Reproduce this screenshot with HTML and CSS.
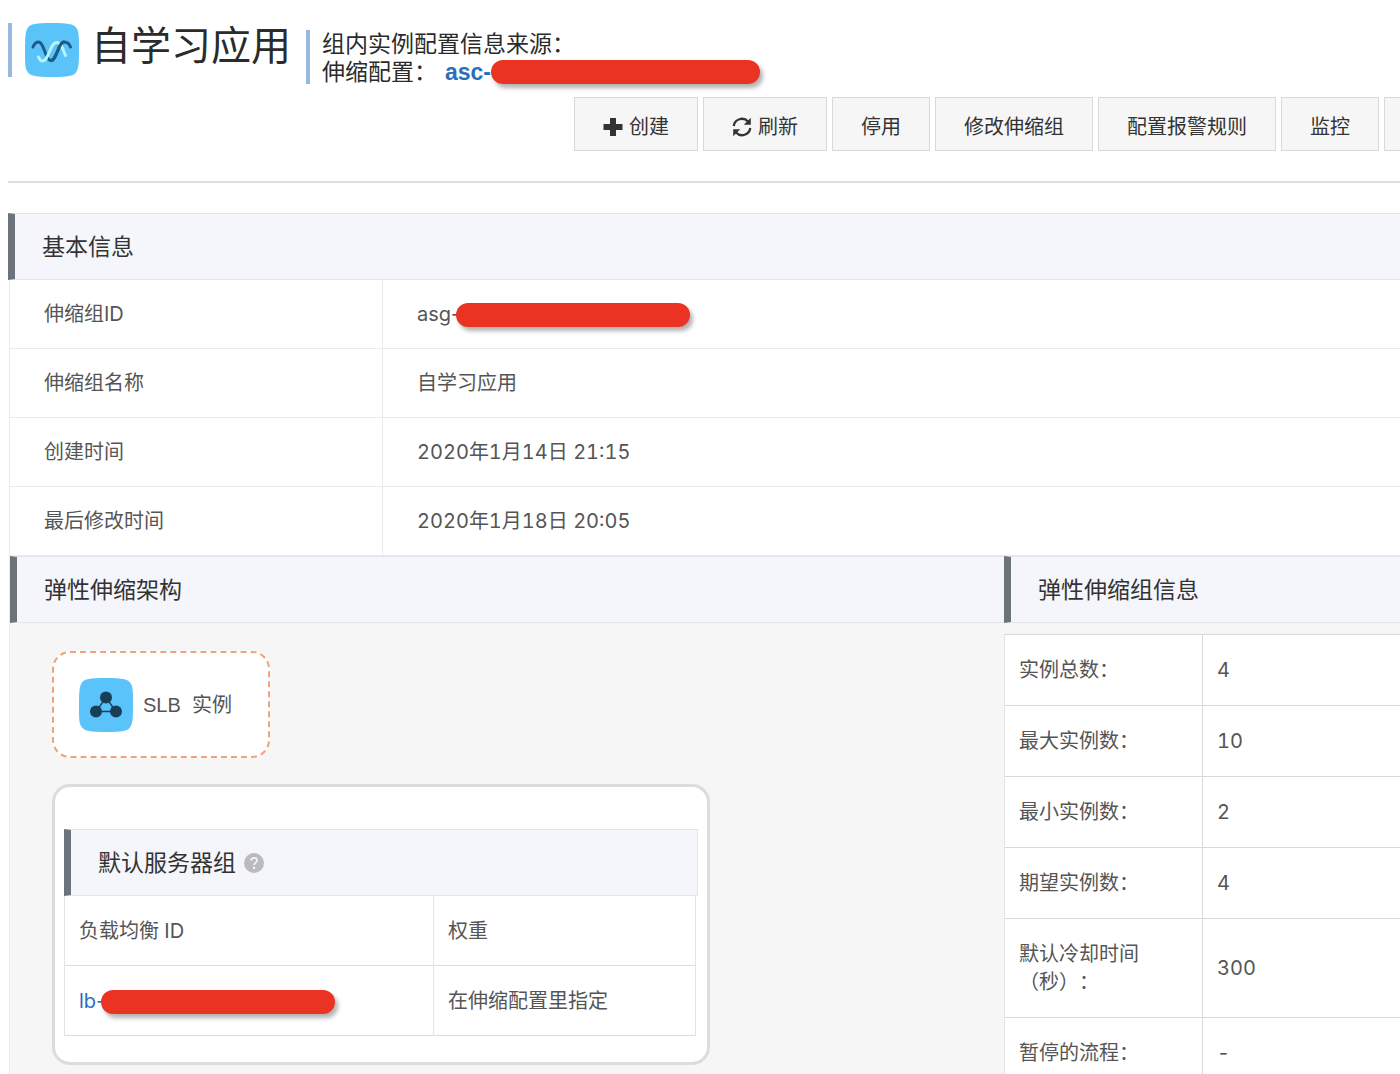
FILE: index.html
```html
<!DOCTYPE html>
<html lang="zh-CN">
<head>
<meta charset="utf-8">
<meta name="viewport" content="width=device-width, initial-scale=1">
<title>自学习应用</title>
<link rel="stylesheet" href="styles.css">
</head>
<body>
<main class="page">
  <header class="page-header">
    <div class="identity">
      <svg class="app-icon" viewBox="0 0 54 54" aria-hidden="true">
        <path d="M27 0C43 0 48 1 51 4.500S54 13 54 27S53.500 46 51 49.500S43 54 27 54S6 53 3 49.500S0 41 0 27S.5 8 3 4.500S11 0 27 0Z" fill="#5ac3fa"/>
        <g fill="none" stroke-width="3" stroke-linecap="round">
          <path d="M8 24C9.500 20.500 11 19 13.500 19C19 19 20.500 37.500 26 37.500C31.500 37.500 33.500 19 39 19C42 19 44.500 21 45.500 24" stroke="#1d5c86"/>
          <path d="M13.500 34C14.500 36.500 15.500 38 17.500 38C23.500 38 25.500 19.500 31.500 19.500C36.500 19.500 38.500 28 40.500 32.500" stroke="#b9f3ff"/>
          <path d="M26 37.500C31.500 37.500 33.500 19 39 19" stroke="#1d5c86"/>
        </g>
      </svg>
      <h1 class="title">自学习应用</h1>
    </div>
    <div class="source">
      <p>组内实例配置信息来源：</p>
      <p>伸缩配置：<a class="config-link" href="#config">asc-<span class="mask mask-wide"></span></a></p>
    </div>
  </header>

  <div class="toolbar">
    <button class="btn" type="button">
      <svg class="btn-icon" viewBox="0 0 20 20" aria-hidden="true"><path d="M7 1H13V7H19.500V13H13V19H7V13H.5V7H7Z" fill="#333"/></svg>创建</button>
    <button class="btn" type="button">
      <svg class="btn-icon" viewBox="0 0 20 20" aria-hidden="true"><path d="M1.700 9A8.300 8.300 0 0 1 16 4.500M18.300 11A8.300 8.300 0 0 1 4 15.500" fill="none" stroke="#333" stroke-width="2.300"/><path d="M18.800 .8V7.800H11.800ZM1.200 19.200V12.200H8.200Z" fill="#333"/></svg>刷新</button>
    <button class="btn" type="button">停用</button>
    <button class="btn" type="button">修改伸缩组</button>
    <button class="btn" type="button">配置报警规则</button>
    <button class="btn" type="button">监控</button>
    <button class="btn btn-more" type="button" aria-label="更多"></button>
  </div>

  <section class="basic">
    <h2 class="section-title">基本信息</h2>
    <table class="basic-table">
      <tbody>
        <tr><th scope="row">伸缩组ID</th><td class="resource-id">asg-<span class="mask"></span></td></tr>
        <tr><th scope="row">伸缩组名称</th><td>自学习应用</td></tr>
        <tr><th scope="row">创建时间</th><td>2020年1月14日 21:15</td></tr>
        <tr><th scope="row">最后修改时间</th><td>2020年1月18日 20:05</td></tr>
      </tbody>
    </table>
  </section>

  <div class="columns">
    <section>
      <h2 class="section-title">弹性伸缩架构</h2>
      <div class="architecture">
        <div class="slb">
          <svg class="app-icon" viewBox="0 0 54 54" aria-hidden="true">
            <path d="M27 0C43 0 48 1 51 4.500S54 13 54 27S53.500 46 51 49.500S43 54 27 54S6 53 3 49.500S0 41 0 27S.5 8 3 4.500S11 0 27 0Z" fill="#5ac3fa"/>
            <path d="M27 19.500L17 33.500H37Z" fill="none" stroke="#173f57" stroke-width="1.400"/>
            <g fill="#173f57"><circle cx="27" cy="19.500" r="6"/><circle cx="17" cy="33.500" r="6"/><circle cx="37" cy="33.500" r="6"/></g>
          </svg>
          <span class="slb-name">SLB&nbsp; 实例</span>
        </div>
        <div class="group">
          <h3 class="section-title section-title-boxed">默认服务器组
            <svg class="help" viewBox="0 0 20 20" aria-hidden="true"><circle cx="10" cy="10" r="10" fill="#bbb"/><path d="M7 7.600C7.200 3.800 13.200 4 13 7.500C12.900 9.600 10.100 9.800 10.100 12.300" fill="none" stroke="#f5f6fa" stroke-width="1.700"/><circle cx="10.100" cy="15" r="1.200" fill="#f5f6fa"/></svg>
          </h3>
          <table class="group-table">
            <thead><tr><th scope="col">负载均衡 ID</th><th scope="col">权重</th></tr></thead>
            <tbody><tr><td class="resource-id"><a class="lb-link" href="#lb">lb-<span class="mask"></span></a></td><td>在伸缩配置里指定</td></tr></tbody>
          </table>
        </div>
      </div>
    </section>
    <section>
      <h2 class="section-title">弹性伸缩组信息</h2>
      <table class="stats">
        <tbody>
          <tr><th scope="row">实例总数：</th><td>4</td></tr>
          <tr><th scope="row">最大实例数：</th><td>10</td></tr>
          <tr><th scope="row">最小实例数：</th><td>2</td></tr>
          <tr><th scope="row">期望实例数：</th><td>4</td></tr>
          <tr><th scope="row">默认冷却时间（秒）：</th><td>300</td></tr>
          <tr><th scope="row">暂停的流程：</th><td>-</td></tr>
        </tbody>
      </table>
    </section>
  </div>
</main>
</body>
</html>
```
FILE: styles.css
```css
* {
  box-sizing: border-box;
}

html {
  overflow: hidden;
}

body {
  margin: 0;
  background: #fff;
  color: #555;
  font: 20px/28px Inter, "Noto Sans CJK SC", sans-serif;
  font-variant-numeric: tabular-nums;
  text-spacing-trim: space-all;
}

h1, h2, h3, p {
  margin: 0;
  font-weight: 400;
}

a {
  text-decoration: none;
}

table {
  border-collapse: separate;
  border-spacing: 0;
  table-layout: fixed;
  width: 100%;
}

th, td {
  padding: 0;
  font-weight: 400;
  text-align: left;
}

.page {
  padding: 23px 0 0 8px;
  overflow: hidden;
}

/* Header */
.page-header {
  display: flex;
  align-items: flex-start;
  gap: 15px;
  color: #2b2b2b;
}

.identity {
  display: flex;
  align-items: center;
  gap: 12px;
  height: 54px;
  padding-left: 13px;
  border-left: 4px solid #97b9de;
}

.app-icon {
  flex: none;
  width: 54px;
  height: 54px;
}

.title {
  padding-bottom: 8px;
  font-size: 40px;
  line-height: 46px;
}

.source {
  height: 54px;
  margin-top: 7px;
  padding-left: 12px;
  border-left: 4px solid #97b9de;
  font-size: 23px;
  line-height: 28px;
}

.config-link {
  margin-left: 8px;
  color: #2a6fbd;
  font-family: "Liberation Sans", "Noto Sans CJK SC", sans-serif;
  font-weight: 700;
}

.resource-id {
  font-variant-numeric: normal;
}

.mask {
  display: inline-block;
  width: 234px;
  height: 24px;
  margin-left: -4px;
  border-radius: 12px;
  background: #ea3323;
  box-shadow: 3px 4px 4px rgba(0, 0, 0, 0.3);
  vertical-align: -6px;
}

.mask-wide {
  width: 269px;
  margin-left: 0;
  vertical-align: -4px;
}

/* Toolbar */
.toolbar {
  display: flex;
  justify-content: flex-end;
  gap: 5px;
  margin-right: -80px;
  padding: 13px 0 30px;
}

.btn {
  display: flex;
  flex: none;
  align-items: center;
  gap: 6px;
  height: 54px;
  padding: 6px 28px 0;
  border: 1px solid #d9d9d9;
  background: #f6f6f6;
  color: #333;
  font: inherit;
}

.btn-icon {
  width: 20px;
  height: 20px;
}

.btn-more {
  width: 96px;
}

/* Sections */
.section-title {
  display: flex;
  align-items: center;
  gap: 8px;
  height: 67px;
  padding-left: 27px;
  border: solid #e2e5e9;
  border-width: 1px 0 1px 7px;
  border-left-color: #6d737b;
  background: #f5f6fb;
  color: #333;
  font-size: 23px;
}

.section-title-boxed {
  border-right-width: 1px;
}

.basic {
  padding-top: 30px;
  border-top: 2px solid #dedede;
}

.basic-table {
  margin-left: 1px;
  border-left: 1px solid #ebebeb;
}

.basic-table th,
.basic-table td {
  height: 69px;
  padding-left: 34px;
  border-bottom: 1px solid #ebebeb;
}

.basic-table th {
  width: 373px;
  border-right: 1px solid #ebebeb;
}

.columns {
  display: grid;
  grid-template-columns: minmax(0, 1fr) 396px;
  margin-left: 1px;
  border-left: 1px solid #ebebeb;
  background: #f6f6f6;
}

.architecture {
  display: flex;
  flex-direction: column;
  align-items: flex-start;
  gap: 26px;
  padding: 28px 42px 24px;
}

.slb {
  display: flex;
  align-items: center;
  gap: 10px;
  width: 218px;
  height: 107px;
  padding-left: 25px;
  border: 2px dashed #eba57b;
  border-radius: 18px;
  background: #fff;
}

.slb-name {
  font-family: "Liberation Sans", "Noto Sans CJK SC", sans-serif;
}

.group {
  width: 658px;
  padding: 42px 9px 26px;
  border: 3px solid #dcdcdc;
  border-radius: 18px;
  background: #fff;
}

.help {
  width: 20px;
  height: 20px;
}

.group-table {
  width: 632px;
  border-left: 1px solid #e4e4e4;
}

.group-table th,
.group-table td {
  height: 70px;
  padding-left: 14px;
  border-right: 1px solid #e4e4e4;
  border-bottom: 1px solid #dcdcdc;
}

.group-table th:first-child {
  width: 369px;
}

.lb-link {
  color: #2a6fbd;
}

.stats {
  margin-top: 11px;
  border-top: 1px solid #d9d9d9;
  border-left: 1px solid #e4e4e4;
  background: #fff;
}

.stats th,
.stats td {
  padding: 21px 14px;
  border-bottom: 1px solid #d9d9d9;
}

.stats th {
  width: 198px;
  border-right: 1px solid #d9d9d9;
}
```
